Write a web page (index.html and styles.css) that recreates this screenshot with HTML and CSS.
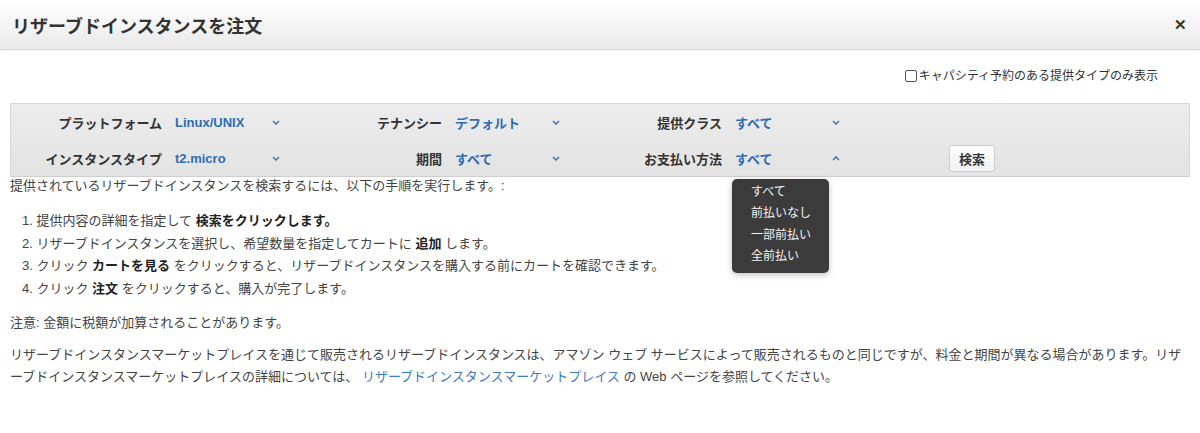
FILE: index.html
```html
<!DOCTYPE html>
<html lang="ja">
<head>
    <meta charset="UTF-8">
    <meta name="viewport" content="width=device-width, initial-scale=1.0">
    <title>リザーブドインスタンスを注文</title>
    <link rel="stylesheet" href="styles.css">
</head>
<body>
    <div class="modal-header">
        <h1>リザーブドインスタンスを注文</h1>
        <span class="close">✕</span>
    </div>
    <div class="modal-body">
        <div class="capacity">
            <label><span class="box"></span>キャパシティ予約のある提供タイプのみ表示</label>
        </div>
        <div class="filters">
            <div class="field">
                <span class="field-label">プラットフォーム</span>
                <span class="select">Linux/UNIX<svg class="chev" viewBox="0 0 8 5"><polyline points="1,1 4,4 7,1"/></svg></span>
            </div>
            <div class="field">
                <span class="field-label">テナンシー</span>
                <span class="select">デフォルト<svg class="chev" viewBox="0 0 8 5"><polyline points="1,1 4,4 7,1"/></svg></span>
            </div>
            <div class="field">
                <span class="field-label">提供クラス</span>
                <span class="select">すべて<svg class="chev" viewBox="0 0 8 5"><polyline points="1,1 4,4 7,1"/></svg></span>
            </div>
            <div class="field"></div>
            <div class="field">
                <span class="field-label">インスタンスタイプ</span>
                <span class="select">t2.micro<svg class="chev" viewBox="0 0 8 5"><polyline points="1,1 4,4 7,1"/></svg></span>
            </div>
            <div class="field">
                <span class="field-label">期間</span>
                <span class="select">すべて<svg class="chev" viewBox="0 0 8 5"><polyline points="1,1 4,4 7,1"/></svg></span>
            </div>
            <div class="field">
                <span class="field-label">お支払い方法</span>
                <span class="select open">すべて<svg class="chev" viewBox="0 0 8 5"><polyline points="1,4 4,1 7,4"/></svg>
                    <ul class="menu">
                        <li>すべて</li>
                        <li>前払いなし</li>
                        <li>一部前払い</li>
                        <li>全前払い</li>
                    </ul>
                </span>
            </div>
            <div class="field">
                <button class="search">検索</button>
            </div>
        </div>
        <div class="content">
            <p class="intro">提供されているリザーブドインスタンスを検索するには、以下の手順を実行します。:</p>
            <ol class="steps">
                <li>提供内容の詳細を指定して <b>検索をクリックします。</b></li>
                <li>リザーブドインスタンスを選択し、希望数量を指定してカートに <b>追加</b> します。</li>
                <li>クリック <b>カートを見る</b> をクリックすると、リザーブドインスタンスを購入する前にカートを確認できます。</li>
                <li>クリック <b>注文</b> をクリックすると、購入が完了します。</li>
            </ol>
            <p class="note">注意: 金額に税額が加算されることがあります。</p>
            <p class="market">リザーブドインスタンスマーケットプレイスを通じて販売されるリザーブドインスタンスは、アマゾン ウェブ サービスによって販売されるものと同じですが、料金と期間が異なる場合があります。リザーブドインスタンスマーケットプレイスの詳細については、 <a href="#">リザーブドインスタンスマーケットプレイス</a> の Web ページを参照してください。</p>
        </div>
    </div>
</body>
</html>
```

FILE: styles.css
```css
body {
    margin: 0;
    background: #fff;
    color: #444;
    font-family: "Liberation Sans", "Noto Sans CJK JP", sans-serif;
}

/* ヘッダー */
.modal-header {
    height: 49px;
    display: flex;
    align-items: center;
    justify-content: space-between;
    padding: 0 13px 0 12px;
    background: linear-gradient(#ffffff, #e9e9e9);
    border-bottom: 1px solid #d6d6d6;
    box-shadow: 0 1px 2px rgba(0, 0, 0, 0.06);
}
.modal-header h1 {
    margin: 0;
    font-size: 18px;
    font-weight: bold;
    color: #333;
}
.close {
    font-size: 15px;
    font-weight: bold;
    color: #333;
}

.modal-body {
    padding: 18px 10px 0;
}

/* キャパシティ予約 */
.capacity {
    display: flex;
    justify-content: flex-end;
    padding-right: 32px;
    margin-bottom: 19px;
    font-size: 12px;
    line-height: 16px;
    color: #333;
}
.capacity label {
    display: flex;
    align-items: center;
    gap: 2px;
}
.box {
    width: 10px;
    height: 10px;
    border: 1px solid #555;
    border-radius: 2px;
    background: #fff;
}

/* フィルター */
.filters {
    display: grid;
    grid-template-columns: 280px 280px 280px 1fr;
    grid-auto-rows: 36px;
    background: linear-gradient(#ececec, #e3e3e3);
    border: 1px solid #d8d8d8;
    border-bottom-color: #cfcfcf;
}
.field {
    display: flex;
    align-items: center;
    gap: 13px;
    font-size: 13px;
}
.field-label {
    width: 151px;
    text-align: right;
    font-weight: bold;
    color: #333;
}
.select {
    position: relative;
    width: 110px;
    display: flex;
    align-items: center;
    justify-content: space-between;
    color: #2f6db3;
    font-weight: bold;
}
.chev {
    width: 8px;
    height: 5px;
    margin-right: 5px;
    fill: none;
    stroke: #4a76ad;
    stroke-width: 1.6;
}
.search {
    margin-left: 98px;
    width: 46px;
    height: 27px;
    padding: 0;
    font-family: inherit;
    font-size: 13px;
    font-weight: bold;
    color: #333;
    background: linear-gradient(#fdfdfd, #f1f1f1);
    border: 1px solid #cdcdcd;
    border-radius: 3px;
}

/* ドロップダウン */
.menu {
    position: absolute;
    left: -3px;
    top: 30px;
    width: 97px;
    margin: 0;
    padding: 3px 0 5px;
    list-style: none;
    background: #3b3b3b;
    border-radius: 5px;
    box-shadow: 0 2px 6px rgba(0, 0, 0, 0.25);
    font-size: 12px;
    font-weight: normal;
    line-height: 21.5px;
    color: #f2f2f2;
    z-index: 2;
}
.menu li {
    padding-left: 19px;
}

/* 説明 */
.content {
    font-size: 13px;
    color: #444;
}
.content b {
    color: #222;
}
.intro {
    margin: 0;
    line-height: 18px;
}
.steps {
    margin: 15px 0 14px;
    padding-left: 0;
    list-style-position: inside;
    line-height: 22.5px;
}
.steps li {
    padding-left: 12px;
}
.note {
    margin: 0 0 12px;
    line-height: 18px;
}
.market {
    margin: 0;
    line-height: 22px;
}
.market a {
    color: #3d7ac0;
    text-decoration: none;
}
```
